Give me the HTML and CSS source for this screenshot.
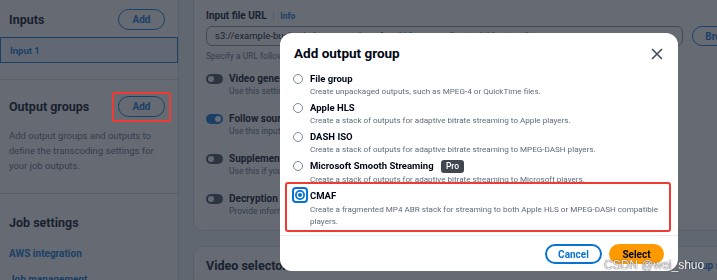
FILE: index.html
```html
<!doctype html>
<html>
    <head>
        <title>Create job - MediaConvert</title>
        <link rel="stylesheet" href="styles.css">
    </head>
    <body>
        <div class="page">
            <nav class="side">
                <div class="side-head">
                    <h2>Inputs</h2>
                    <button type="button" class="pill">Add</button>
                </div>
                <div class="side-item">Input 1</div>
                <hr class="side-rule">
                <div class="side-head">
                    <h2>Output groups</h2>
                    <button type="button" class="pill marked">Add</button>
                </div>
                <p class="side-note">Add output groups and outputs to define the transcoding settings for your job outputs.</p>
                <hr class="side-rule last">
                <h2 class="side-title">Job settings</h2>
                <a class="side-link">AWS integration</a>
                <a class="side-link">Job management</a>
            </nav>
            <main class="main">
                <section class="card">
                    <div class="field-label">Input file URL <span class="info">Info</span></div>
                    <div class="field-row">
                        <div class="text-input">s3://example-bucket/cdn-sources/cmaf-multi-language/inputs/video_track.ts</div>
                        <button type="button" class="pill browse">Browse</button>
                    </div>
                    <div class="field-help">Specify a URL following the format s3://bucket/prefix/file or https://example.com/file.</div>
                    <div class="toggle-row">
                        <span class="toggle"></span>
                        <div>
                            <div class="toggle-title">Video generator</div>
                            <div class="toggle-desc">Use this setting to create a video input from black frames.</div>
                        </div>
                    </div>
                    <div class="toggle-row">
                        <span class="toggle on"></span>
                        <div>
                            <div class="toggle-title">Follow source</div>
                            <div class="toggle-desc">Use this input's video properties for all outputs.</div>
                        </div>
                    </div>
                    <div class="toggle-row">
                        <span class="toggle"></span>
                        <div>
                            <div class="toggle-title">Supplemental IMPs</div>
                            <div class="toggle-desc">Use this if your input is an IMF package.</div>
                        </div>
                    </div>
                    <div class="toggle-row">
                        <span class="toggle"></span>
                        <div>
                            <div class="toggle-title">Decryption settings</div>
                            <div class="toggle-desc">Provide information to decrypt the input.</div>
                        </div>
                    </div>
                </section>
                <section class="card">
                    <h2 class="card-title">Video selector <span class="card-link">Setup selector</span></h2>
                </section>
            </main>
        </div>

        <div class="overlay">
            <div class="modal">
                <div class="modal-head">
                    <h1>Add output group</h1>
                    <svg class="close" width="12" height="12" viewBox="0 0 12 12"><path d="M1 1L11 11M11 1L1 11" stroke="#414d5c" stroke-width="1.6" fill="none"/></svg>
                </div>
                <div class="options">
                    <label class="option">
                        <span class="radio"></span>
                        <span class="opt-label">File group</span>
                        <span class="opt-desc">Create unpackaged outputs, such as MPEG-4 or QuickTime files.</span>
                    </label>
                    <label class="option">
                        <span class="radio"></span>
                        <span class="opt-label">Apple HLS</span>
                        <span class="opt-desc">Create a stack of outputs for adaptive bitrate streaming to Apple players.</span>
                    </label>
                    <label class="option">
                        <span class="radio"></span>
                        <span class="opt-label">DASH ISO</span>
                        <span class="opt-desc">Create a stack of outputs for adaptive bitrate streaming to MPEG-DASH players.</span>
                    </label>
                    <label class="option">
                        <span class="radio"></span>
                        <span class="opt-label">Microsoft Smooth Streaming <span class="badge">Pro</span></span>
                        <span class="opt-desc">Create a stack of outputs for adaptive bitrate streaming to Microsoft players.</span>
                    </label>
                    <label class="option marked">
                        <svg class="radio-on" width="16" height="16" viewBox="0 0 16 16">
                            <rect x="1" y="1" width="14" height="14" rx="3" fill="none" stroke="#0972d3" stroke-width="2"/>
                            <circle cx="8" cy="8" r="5" fill="#0972d3"/>
                            <circle cx="8" cy="8" r="3.2" fill="#fff"/>
                            <circle cx="8" cy="8" r="2.1" fill="#0972d3"/>
                        </svg>
                        <span class="opt-label">CMAF</span>
                        <span class="opt-desc">Create a fragmented MP4 ABR stack for streaming to both Apple HLS or MPEG-DASH compatible players.</span>
                    </label>
                </div>
                <div class="modal-foot">
                    <button type="button" class="pill">Cancel</button>
                    <button type="button" class="pill primary">Select</button>
                </div>
            </div>
        </div>
        <div class="watermark">CSDN @wei_shuo</div>
    </body>
</html>
```

FILE: styles.css
```css
* {
    box-sizing: border-box;
}
html,
body {
    margin: 0;
    padding: 0;
    height: 100%;
    overflow: hidden;
}
body {
    font-family: Roboto, "Liberation Sans", sans-serif;
    color: #000716;
    background-color: #fff;
}
h1,
h2 {
    margin: 0;
}
.page {
    display: flex;
    width: 766px;
    height: 100%;
}

/* left navigation */
.side {
    width: 179px;
    flex-shrink: 0;
    border-right: 1px solid #d5dbdb;
    display: flex;
    flex-direction: column;
}
.side > * {
    flex-shrink: 0;
}
.side-head {
    display: flex;
    align-items: center;
    justify-content: space-between;
    padding: 0 13px 0 9px;
    height: 21px;
}
.side-head:first-child {
    margin-top: 9px;
}
.side-head h2,
.side-title {
    font-size: 12.5px;
    font-weight: 700;
}
.side-item {
    margin-top: 7px;
    height: 26px;
    padding-left: 9px;
    display: flex;
    align-items: center;
    border: 1px solid #0972d3;
    background-color: #f2f8fd;
    color: #0972d3;
    font-size: 9.5px;
    font-weight: 700;
}
.side-rule {
    border: none;
    border-top: 1px solid #d5dbdb;
    margin: 16px 0 16px 0;
    height: 1px;
}
.side-note {
    margin: 11px 20px 0 9px;
    font-size: 9.5px;
    line-height: 15px;
    color: #5f6b7a;
}
.side-rule.last {
    margin: 20px 0 0 0;
}
.side-title {
    padding-left: 9px;
    margin-top: 21px;
    line-height: 16px;
}
.side-link {
    padding-left: 9px;
    margin-top: 14px;
    color: #0972d3;
    font-size: 10px;
    font-weight: 700;
    line-height: 18px;
}
.side-link + .side-link {
    margin-top: 8px;
}

.pill {
    font-family: inherit;
    height: 21px;
    padding: 0 12px;
    border: 1.5px solid #0972d3;
    border-radius: 11px;
    background-color: #fff;
    color: #0972d3;
    font-size: 10px;
    font-weight: 700;
}
.side .pill {
    width: 47px;
    padding: 0;
}
.pill.marked {
    position: relative;
}
.pill.marked::after {
    content: "";
    position: absolute;
    top: -5px;
    bottom: -6px;
    left: -7px;
    right: -7px;
    z-index: 30;
    border: 2px solid #ee3b33;
    border-radius: 2px;
}

/* main content */
.main {
    flex: 1;
    background-color: #f2f3f3;
    padding: 0 0 0 14px;
    display: flex;
    flex-direction: column;
    gap: 15px;
}
.card {
    background-color: #fff;
    border: 1px solid #d5dbdb;
    border-radius: 10px;
    padding: 0 13px 13px 12px;
}
.card:first-child {
    margin-top: -14px;
    padding-top: 22px;
}
.field-label {
    font-size: 10px;
    font-weight: 700;
    line-height: 14px;
}
.info {
    margin-left: 4px;
    padding-left: 6px;
    border-left: 1px solid #d5dbdb;
    color: #0972d3;
    font-size: 8.5px;
}
.field-row {
    display: flex;
    gap: 9px;
    margin-top: 3px;
}
.text-input {
    flex: 1;
    height: 20px;
    padding: 0 8px;
    border: 1px solid #8c8c94;
    border-radius: 6px;
    font-size: 9.5px;
    line-height: 18px;
    white-space: nowrap;
    overflow: hidden;
}
.browse {
    width: 60px;
    height: 20px;
}
.field-help {
    margin-top: 4px;
    font-size: 8.5px;
    line-height: 12px;
    color: #5f6b7a;
    white-space: nowrap;
}
.toggle-row {
    display: flex;
    gap: 6px;
    margin-top: 11px;
    height: 24px;
}
.toggle-row + .toggle-row {
    margin-top: 16px;
}
.toggle {
    width: 17px;
    height: 10px;
    margin-top: 1px;
    border-radius: 5px;
    background-color: #414d5c;
    position: relative;
    flex-shrink: 0;
}
.toggle::after {
    content: "";
    position: absolute;
    top: 2px;
    left: 2px;
    width: 6px;
    height: 6px;
    border-radius: 50%;
    background-color: #fff;
}
.toggle.on {
    background-color: #0972d3;
}
.toggle.on::after {
    left: 9px;
}
.toggle-title {
    font-size: 10px;
    font-weight: 700;
    line-height: 12px;
    white-space: nowrap;
}
.toggle-desc {
    font-size: 8.5px;
    line-height: 12px;
    color: #5f6b7a;
    white-space: nowrap;
}
.card-title {
    padding-top: 11px;
    font-size: 12.5px;
    line-height: 16px;
    display: flex;
    justify-content: space-between;
}
.card-link {
    color: #0972d3;
    font-size: 10px;
}

/* modal */
.overlay {
    position: fixed;
    inset: 0;
    z-index: 10;
    background-color: rgba(35, 43, 55, 0.7);
    padding: 33px 0 0 280px;
}
.modal {
    width: 398px;
    height: 238px;
    background-color: #fff;
    border-radius: 12px;
    display: flex;
    flex-direction: column;
}
.modal-head {
    display: flex;
    align-items: center;
    justify-content: space-between;
    padding: 11px 15px 0 14px;
}
.modal-head h1 {
    font-size: 13.5px;
    font-weight: 700;
    line-height: 18px;
}
.close {
    margin-top: 1px;
}
.options {
    display: flex;
    flex-direction: column;
    gap: 4px;
    padding: 10px 13px 0 13px;
}
.option {
    display: grid;
    grid-template-columns: 17px 1fr;
    position: relative;
}
.radio {
    width: 10px;
    height: 10px;
    margin-top: 1.5px;
    border: 1px solid #7d8998;
    border-radius: 50%;
    grid-row: 1;
}
.radio-on {
    margin: -1.5px 0 0 -1px;
    grid-row: 1;
}
.opt-label {
    grid-column: 2;
    font-size: 9.5px;
    font-weight: 700;
    line-height: 13px;
}
.opt-desc {
    grid-column: 2;
    font-size: 8.1px;
    line-height: 12px;
    color: #5f6b7a;
}
.badge {
    display: inline-block;
    margin-left: 5px;
    padding: 0 5px;
    border-radius: 3px;
    background-color: #414750;
    color: #fff;
    font-size: 8.5px;
    font-weight: 500;
    line-height: 13px;
    vertical-align: middle;
}
.option.marked::before {
    content: "";
    position: absolute;
    top: -6.5px;
    bottom: -4.5px;
    left: -8px;
    right: -6px;
    border: 2px solid #ee3b33;
    border-radius: 3px;
}
.modal-foot {
    margin-top: auto;
    border-top: 1px solid #e9ebed;
    display: flex;
    justify-content: flex-end;
    gap: 7px;
    padding: 8px 14px 7px 0;
}
.modal-foot .pill {
    height: 20px;
    width: 57px;
    padding: 0;
    border-width: 2px;
}
.modal-foot .primary {
    width: 55px;
    border-color: #ff9900;
    background-color: #ff9900;
    color: #000716;
}

.watermark {
    position: fixed;
    left: 604px;
    top: 258px;
    z-index: 40;
    font-family: "Liberation Sans", sans-serif;
    font-size: 12px;
    color: rgba(255, 255, 255, 0.9);
    text-shadow: 0 0 1px #555, 0 0 1px #555;
}
```
